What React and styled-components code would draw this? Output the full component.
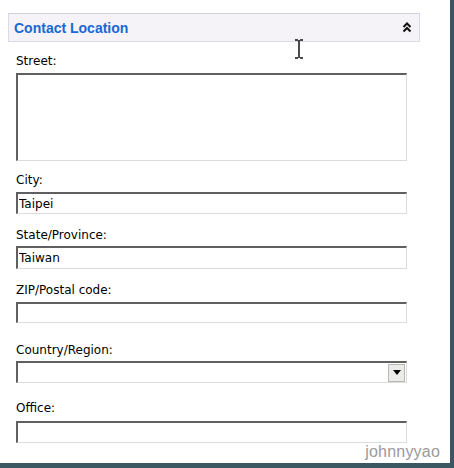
import React from 'react'
import styled, { createGlobalStyle } from 'styled-components'

const GlobalStyle = createGlobalStyle`
  html, body {
    margin: 0;
    padding: 0;
    background: #ffffff;
  }
`

const Frame = styled('div')`
  position: relative;
  box-sizing: border-box;
  width: 454px;
  height: 468px;
  background: #ffffff;
  border-right: 4px solid #3c5560;
  border-bottom: 5px solid #3a5862;
  padding: 13px 0 0 8px;
  overflow: hidden;
`

const SectionHeader = styled('div')`
  box-sizing: border-box;
  width: 412px;
  height: 29px;
  display: flex;
  align-items: center;
  justify-content: space-between;
  padding: 0 7px 0 5px;
  background: #f5f3f7;
  border: 1px solid #dcdae2;
  border-top-color: #d2d0da;
`

const SectionTitle = styled('span')`
  font-family: 'Liberation Sans', Arial, sans-serif;
  font-weight: bold;
  font-size: 14px;
  color: #1a68d4;
`

const Fields = styled('div')`
  display: flex;
  flex-direction: column;
  padding: 0 0 0 8px;
`

const Field = styled('div')`
  display: flex;
  flex-direction: column;
  margin-top: ${(p) => p.$gap}px;
`

const Label = styled('label')`
  font-family: 'DejaVu Sans', Tahoma, sans-serif;
  font-size: 12px;
  line-height: 16px;
  color: #000000;
  margin-bottom: ${(p) => p.$space || 4}px;
`

const insetBox = `
  box-sizing: border-box;
  width: 391px;
  border-top: 2px solid #606060;
  border-left: 2px solid #606060;
  border-right: 1px solid #dcdcd8;
  border-bottom: 1px solid #dcdcd8;
  background: #ffffff;
`

const TextBox = styled('input')`
  ${insetBox};
  height: ${(p) => p.$h || 22}px;
  margin: 0;
  padding: 0 0 0 1px;
  font-family: 'DejaVu Sans', Tahoma, sans-serif;
  font-size: 12px;
  color: #000000;
  outline: none;
`

const TextArea = styled('textarea')`
  ${insetBox};
  height: 88px;
  margin: 0;
  padding: 2px;
  resize: none;
  outline: none;
`

const SelectBox = styled('div')`
  ${insetBox};
  height: 22px;
  display: flex;
  justify-content: flex-end;
  align-items: center;
  padding-right: 1px;
`

const DropButton = styled('div')`
  box-sizing: border-box;
  width: 17px;
  height: 18px;
  display: flex;
  align-items: center;
  justify-content: center;
  background: #ebebea;
  border: 1px solid #b8b8b4;
`

const Cursor = styled('svg')`
  position: absolute;
  left: 294px;
  top: 39px;
`

const Watermark = styled('div')`
  position: absolute;
  right: 10px;
  bottom: 2px;
  font-family: 'Liberation Sans Narrow', 'Liberation Sans', sans-serif;
  font-size: 16px;
  color: #9a9a9a;
  letter-spacing: 0.2px;
  text-shadow: 0 0 1px #ffffff;
`

const ChevronsUp = () => (
  <svg width="10" height="11" viewBox="0 0 10 11">
    <path d="M1.5 5 L5 1.5 L8.5 5 M1.5 9.5 L5 6 L8.5 9.5" fill="none" stroke="#111" strokeWidth="2" />
  </svg>
)

const App = () => {
  return (
    <>
      <GlobalStyle />
      <Frame>
        <SectionHeader>
          <SectionTitle>Contact Location</SectionTitle>
          <ChevronsUp />
        </SectionHeader>
        <Fields>
          <Field $gap={11}>
            <Label>Street:</Label>
            <TextArea readOnly />
          </Field>
          <Field $gap={11}>
            <Label>City:</Label>
            <TextBox readOnly defaultValue="Taipei" />
          </Field>
          <Field $gap={13}>
            <Label $space={3}>State/Province:</Label>
            <TextBox readOnly defaultValue="Taiwan" $h={23} />
          </Field>
          <Field $gap={13}>
            <Label>ZIP/Postal code:</Label>
            <TextBox readOnly $h={21} />
          </Field>
          <Field $gap={19}>
            <Label $space={3}>Country/Region:</Label>
            <SelectBox>
              <DropButton>
                <svg width="8" height="5" viewBox="0 0 8 5">
                  <path d="M0 0 H8 L4 5 Z" fill="#000" />
                </svg>
              </DropButton>
            </SelectBox>
          </Field>
          <Field $gap={17}>
            <Label $space={5}>Office:</Label>
            <TextBox readOnly $h={22} />
          </Field>
        </Fields>
        <Cursor width="10" height="20" viewBox="0 0 10 20">
          <path d="M1 1 H4 M6 1 H9 M5 1 V19 M1 19 H4 M6 19 H9" fill="none" stroke="#111" strokeWidth="1.5" />
        </Cursor>
        <Watermark>johnnyyao</Watermark>
      </Frame>
    </>
  )
}

export default App
